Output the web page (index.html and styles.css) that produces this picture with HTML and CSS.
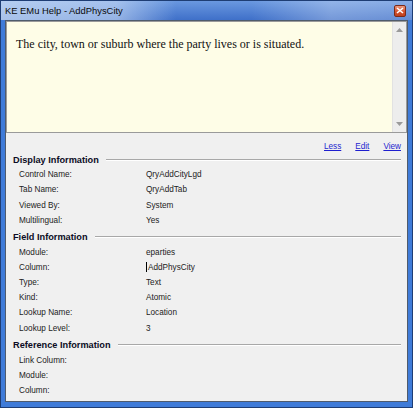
FILE: index.html
```html
<!DOCTYPE html>
<html>
<head>
<meta charset="utf-8">
<title>KE EMu Help - AddPhysCity</title>
<link rel="stylesheet" href="styles.css">
</head>
<body>
<div class="window">
  <div class="titlebar">
    <span class="title">KE EMu Help - AddPhysCity</span>
    <span class="close"><svg width="8" height="7" viewBox="0 0 8 7"><path d="M1 1 L7 6 M7 1 L1 6" stroke="#fff" stroke-width="1.6" fill="none"/></svg></span>
  </div>
  <div class="client">
    <div class="helpbox">
      <div class="helptext">The city, town or suburb where the party lives or is situated.</div>
      <div class="scrollbar">
        <svg class="arrow" width="7" height="4" viewBox="0 0 7 4"><path d="M0 4 L3.5 0 L7 4 Z" fill="#9a9a9a"/></svg>
        <svg class="arrow" width="7" height="4" viewBox="0 0 7 4"><path d="M0 0 L7 0 L3.5 4 Z" fill="#9a9a9a"/></svg>
      </div>
    </div>
    <div class="panel">
      <div class="links"><a href="#">Less</a><a href="#">Edit</a><a href="#">View</a></div>

      <div class="section">
        <div class="heading">Display Information</div>
        <div class="row"><span>Control Name:</span><span>QryAddCityLgd</span></div>
        <div class="row"><span>Tab Name:</span><span>QryAddTab</span></div>
        <div class="row"><span>Viewed By:</span><span>System</span></div>
        <div class="row"><span>Multilingual:</span><span>Yes</span></div>
      </div>

      <div class="section">
        <div class="heading">Field Information</div>
        <div class="row"><span>Module:</span><span>eparties</span></div>
        <div class="row"><span>Column:</span><span><span class="caret"></span>AddPhysCity</span></div>
        <div class="row"><span>Type:</span><span>Text</span></div>
        <div class="row"><span>Kind:</span><span>Atomic</span></div>
        <div class="row"><span>Lookup Name:</span><span>Location</span></div>
        <div class="row"><span>Lookup Level:</span><span>3</span></div>
      </div>

      <div class="section">
        <div class="heading">Reference Information</div>
        <div class="row"><span>Link Column:</span><span></span></div>
        <div class="row"><span>Module:</span><span></span></div>
        <div class="row"><span>Column:</span><span></span></div>
      </div>
    </div>
  </div>
</div>
</body>
</html>
```

FILE: styles.css
```css
html, body {
  margin: 0;
  padding: 0;
  background: #ffffff;
}

.window {
  width: 413px;
  height: 408px;
  box-sizing: border-box;
  border: 1px solid #1e3d74;
  background: #3f7bd8;
  display: flex;
  flex-direction: column;
  padding: 0 4px 5px 4px;
  font-family: "Liberation Sans", Arial, sans-serif;
}

.titlebar {
  margin: 0 -4px;
  height: 19px;
  display: flex;
  align-items: center;
  padding: 0 6px 0 4px;
  background:
    linear-gradient(to right, rgba(205,222,246,0.75) 0, rgba(205,222,246,0.6) 115px, rgba(205,222,246,0) 175px, rgba(255,255,255,0) 250px, rgba(255,255,255,0.28) 330px, rgba(255,255,255,0.2) 413px),
    linear-gradient(#6a98e0, #3f70c9);
}

.title {
  font-size: 9.4px;
  color: #0a0a0a;
  line-height: 19px;
  white-space: nowrap;
}

.close {
  margin-left: auto;
  width: 12px;
  height: 12px;
  box-sizing: border-box;
  border: 1px solid #7c2a18;
  border-radius: 2px;
  background: linear-gradient(#ec9a80, #d4522e 55%, #c0401c);
  display: flex;
  align-items: center;
  justify-content: center;
}

.close svg {
  display: block;
}

.client {
  flex: 1;
  display: flex;
  flex-direction: column;
  border: 1px solid #4f5b6c;
  background: #f0f0f0;
}

.helpbox {
  height: 112px;
  box-sizing: border-box;
  border: 1px solid #9a9a9a;
  display: flex;
}

.helptext {
  flex: 1;
  background: #fefde7;
  padding: 15px 0 0 9px;
  font-family: "Liberation Serif", "Times New Roman", serif;
  font-size: 12px;
  line-height: 14px;
  color: #111;
}

.scrollbar {
  width: 13px;
  background: #ededed;
  border-left: 1px solid #e2e2e2;
  display: flex;
  flex-direction: column;
  align-items: center;
  justify-content: space-between;
  padding: 6px 0 6px 0;
}

.arrow {
  display: block;
}

.panel {
  flex: 1;
  padding: 8px 6px 0 7px;
  font-size: 8.2px;
  color: #222;
}

.links {
  display: flex;
  justify-content: flex-end;
  gap: 14px;
  height: 11px;
  line-height: 11px;
}

.links a {
  color: #1f1fcf;
  text-decoration: underline;
}

.section + .section {
  margin-top: 1.6px;
}

.heading {
  display: flex;
  align-items: center;
  height: 15.2px;
  font-weight: bold;
  font-size: 9.2px;
  color: #0c0c24;
  white-space: nowrap;
}

.heading::after {
  content: "";
  flex: 1;
  margin-left: 7px;
  border-top: 1px solid #a8a8a8;
  border-bottom: 1px solid #ffffff;
}

.row {
  display: grid;
  grid-template-columns: 127px 1fr;
  padding-left: 6px;
  height: 15.2px;
  line-height: 15.2px;
  white-space: nowrap;
}

.caret {
  display: inline-block;
  width: 0;
  height: 10px;
  border-left: 1px solid #000;
  vertical-align: -2px;
  margin-right: 1px;
}
```
